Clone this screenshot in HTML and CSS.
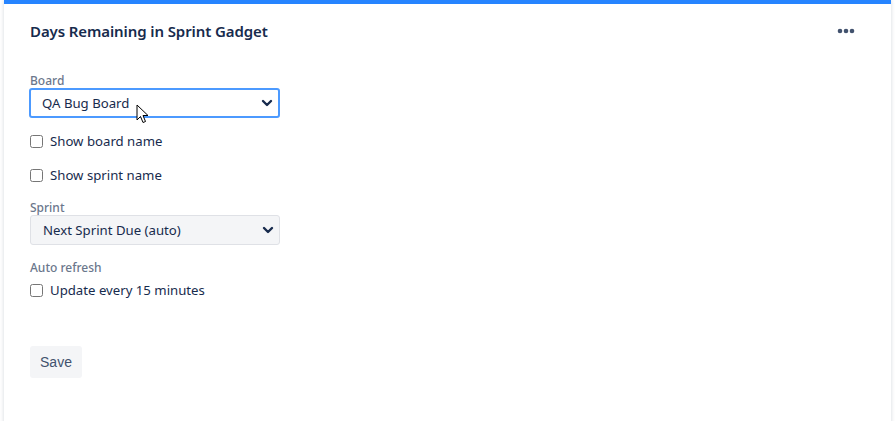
FILE: index.html
```html
<!DOCTYPE html>
<html lang="en">
<head>
    <meta charset="UTF-8">
    <meta name="viewport" content="width=device-width, initial-scale=1.0">
    <title>Days Remaining in Sprint Gadget</title>
    <link rel="stylesheet" href="styles.css">
</head>
<body>
    <div class="gadget">
        <div class="gadget-header">
            <h1>Days Remaining in Sprint Gadget</h1>
            <button class="more" aria-label="More actions">
                <svg width="18" height="6" viewBox="0 0 18 6"><circle cx="3" cy="3" r="2.3" fill="#42526e"/><circle cx="9" cy="3" r="2.3" fill="#42526e"/><circle cx="15" cy="3" r="2.3" fill="#42526e"/></svg>
            </button>
        </div>

        <form class="config">
            <div class="field">
                <label class="field-label" for="board">Board</label>
                <div class="select-wrap">
                    <select id="board" class="select focused">
                        <option>QA Bug Board</option>
                    </select>
                    <!-- mouse pointer hovering the select -->
                    <svg class="pointer" width="13" height="20" viewBox="0 0 13 20"><path d="M1 1 L1 16 L4.5 12.5 L7 18.5 L9.5 17.5 L7 11.5 L12 11.5 Z" fill="#fff" stroke="#000" stroke-width="1" stroke-linejoin="round"/></svg>
                </div>
            </div>

            <label class="check"><input type="checkbox"> Show board name</label>
            <label class="check second"><input type="checkbox"> Show sprint name</label>

            <div class="field sprint">
                <label class="field-label" for="sprint">Sprint</label>
                <select id="sprint" class="select subtle">
                    <option>Next Sprint Due (auto)</option>
                </select>
            </div>

            <div class="field">
                <span class="field-label">Auto refresh</span>
                <label class="check tight"><input type="checkbox"> Update every 15 minutes</label>
            </div>

            <button type="button" class="save">Save</button>
        </form>
    </div>
</body>
</html>
```

FILE: styles.css
```css
body {
    margin: 0;
    background: #fff;
    font-family: "Noto Sans", "Open Sans", sans-serif;
    color: #172b4d;
    overflow: hidden;
}
.gadget {
    margin: 0 4px 0 4px;
    min-height: 440px;
    border-top: 4px solid #2684ff;
    box-shadow: 0 0 4px rgba(9, 30, 66, 0.18);
    padding: 0 26px;
}
.gadget-header {
    display: flex;
    justify-content: space-between;
    align-items: center;
    height: 54px;
}
h1 {
    font-size: 15px;
    font-weight: 600;
    margin: 0;
    letter-spacing: -0.1px;
}
.more {
    border: 0;
    background: none;
    padding: 0;
    margin-right: 10px;
    display: flex;
}
.config {
    padding-top: 16px;
}
.field {
    margin-bottom: 10px;
}
.field.sprint {
    margin-top: 16px;
    margin-bottom: 16px;
}
.field-label {
    display: block;
    font-size: 12px;
    font-weight: 500;
    color: #6b778c;
    line-height: 14px;
}
.select-wrap {
    position: relative;
    width: 251px;
}
.select {
    width: 251px;
    height: 30px;
    font-family: inherit;
    font-size: 13.2px;
    color: #172b4d;
    padding: 0 11px;
    border-radius: 3px;
    appearance: none;
    background-repeat: no-repeat;
    background-position: right 5px center;
    background-image: url("data:image/svg+xml;utf8,<svg xmlns='http://www.w3.org/2000/svg' width='12' height='8' viewBox='0 0 12 8'><path d='M2 2 L6 6 L10 2' fill='none' stroke='%23172b4d' stroke-width='2.4' stroke-linecap='round' stroke-linejoin='round'/></svg>");
}
.focused {
    border: 2px solid #4c9aff;
    background-color: #fff;
    margin-left: -1px;
}
.subtle {
    width: 250px;
    border: 1px solid #dfe1e6;
    background-color: #f4f5f7;
    padding: 0 12px;
}
.pointer {
    position: absolute;
    left: 106px;
    top: 16px;
}
.check {
    display: flex;
    align-items: center;
    gap: 7px;
    font-size: 13.2px;
    height: 20px;
    margin: 13px 0;
}
.check.second {
    margin-top: 14px;
}
.check input {
    margin: 0;
    width: 13px;
    height: 13px;
}
.check.tight {
    margin: 5px 0 0;
}
.save {
    margin-top: 36px;
    border: 0;
    border-radius: 3px;
    background: #f4f5f7;
    color: #42526e;
    font-family: "Liberation Sans", Arial, sans-serif;
    font-size: 14px;
    width: 52px;
    height: 32px;
}
```
